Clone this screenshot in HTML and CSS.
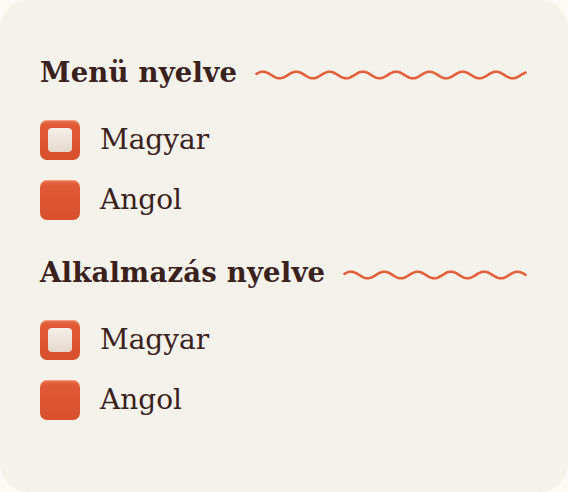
FILE: index.html
```html
<!DOCTYPE html>
<html lang="hu">
<head>
<meta charset="utf-8">
<link rel="stylesheet" href="styles.css">
</head>
<body>
<div class="card">
  <section class="group">
    <div class="heading">
      <h2 class="title">Menü nyelve</h2>
      <svg class="wave" id="w1" height="12" aria-hidden="true"><path d="" /></svg>
    </div>
    <ul class="options">
      <li class="option"><span class="box box-empty"><span class="box-inner"></span></span><span class="label">Magyar</span></li>
      <li class="option"><span class="box box-full"></span><span class="label">Angol</span></li>
    </ul>
  </section>
  <section class="group">
    <div class="heading">
      <h2 class="title">Alkalmazás nyelve</h2>
      <svg class="wave" id="w2" height="12" aria-hidden="true"><path d="" /></svg>
    </div>
    <ul class="options">
      <li class="option"><span class="box box-empty"><span class="box-inner"></span></span><span class="label">Magyar</span></li>
      <li class="option"><span class="box box-full"></span><span class="label">Angol</span></li>
    </ul>
  </section>
</div>
<script src="script.js"></script>
</body>
</html>
```
FILE: styles.css
```css
html, body { margin: 0; padding: 0; }
body {
  width: 568px; height: 492px;
  background: #fcfaf5;
  font-family: "DejaVu Serif", serif;
  color: #3a211c;
}
.card {
  box-sizing: border-box;
  width: 568px; height: 492px;
  background: #f5f2ec;
  border-radius: 28px;
  padding: 53px 40px 0 40px;
  display: flex; flex-direction: column; gap: 33px;
}
.group { display: flex; flex-direction: column; gap: 27px; }
.heading { display: flex; align-items: center; height: 40px; gap: 18px; }
.title {
  margin: 0; font-size: 27.5px; font-weight: bold; white-space: nowrap;
  line-height: 1; letter-spacing: 0.2px;
}
.wave { flex: 1; height: 12px; margin-top: 4px; }
.wave path { fill: none; stroke: #e2603a; stroke-width: 2.6; stroke-linecap: round; }
.options { list-style: none; margin: 0; padding: 0; display: flex; flex-direction: column; gap: 20px; }
.option { display: flex; align-items: center; height: 40px; gap: 20px; }
.box {
  box-sizing: border-box; width: 40px; height: 40px; border-radius: 7px;
  background: linear-gradient(#ea7455 0, #e05a35 12%, #d9502c 100%);
  box-shadow: inset 0 1px 0 rgba(255,190,160,.6);
  display: flex; align-items: center; justify-content: center;
  flex: none;
}
.box-inner {
  width: 24px; height: 24px; border-radius: 4px;
  background: linear-gradient(#f4efe8, #e6d8cd);
}
.label { font-size: 28px; font-weight: 300; line-height: 1; }
```
FILE: script.js
```js
function wave(id) {
  var svg = document.getElementById(id);
  var p = svg.querySelector("path");
  var w = svg.getBoundingClientRect().width;
  var period = 33.3, amp = 3.3, y0 = 6, ph = 0.35;
  var d = "";
  for (var x = 1.5; x <= w - 1.5; x += 1) {
    var y = y0 - amp * Math.sin(((x - 1.5) / period) * 2 * Math.PI + ph);
    d += (d ? " L" : "M") + x.toFixed(1) + " " + y.toFixed(2);
  }
  p.setAttribute("d", d);
}
wave("w1");
wave("w2");
```
